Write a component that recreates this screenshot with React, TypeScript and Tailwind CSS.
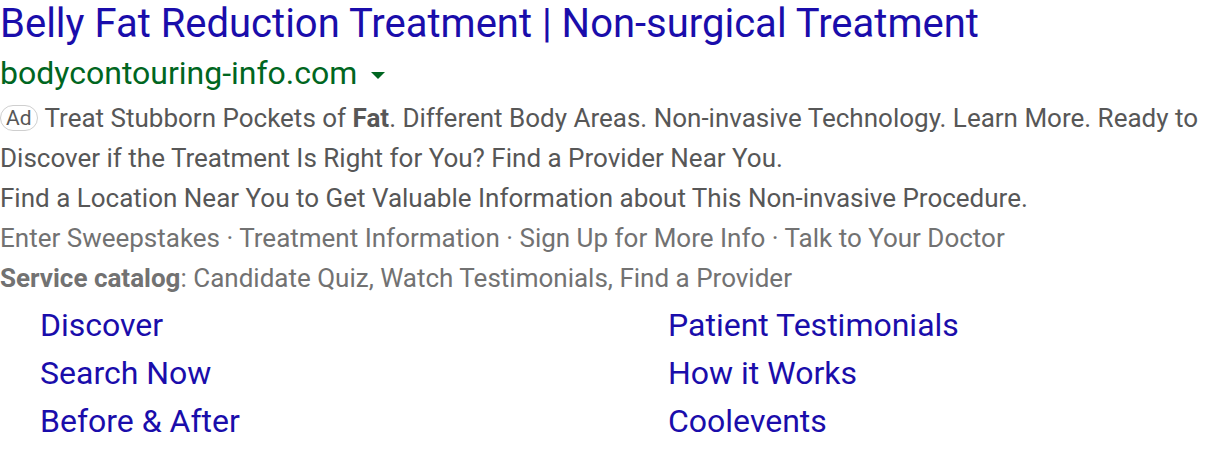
import { ReactNode } from 'react';

const sitelinks: [string, string][] = [
  ['Discover', 'Patient Testimonials'],
  ['Search Now', 'How it Works'],
  ['Before & After', 'Coolevents'],
];

function Line({ children, className = '' }: { children: ReactNode; className?: string }) {
  return <div className={`h-[40px] leading-[40px] whitespace-nowrap ${className}`}>{children}</div>;
}

export default function App() {
  return (
    <div className="bg-white w-[1216px] h-[450px] overflow-hidden font-['Roboto',sans-serif]">
      <h1 className="text-[40px] leading-[48px] text-[#1a0dab] whitespace-nowrap">
        Belly Fat Reduction Treatment | Non-surgical Treatment
      </h1>
      <div className="flex items-center h-[50px] text-[32px] text-[#006621]">
        <span>bodycontouring-info.com</span>
        <span className="ml-[14px] mt-[4px] w-0 h-0 border-l-[7px] border-r-[7px] border-t-[7px] border-l-transparent border-r-transparent border-t-[#006621]" />
      </div>
      <div className="text-[26px] text-[#575757]">
        <Line className="flex items-center">
          <span className="inline-flex items-center justify-center h-[26px] px-[5px] mr-[7px] rounded-full border border-[#cfcfcf] text-[21px] leading-none">
            Ad
          </span>
          <span>
            Treat Stubborn Pockets of <b className="font-bold">Fat</b>. Different Body Areas. Non-invasive Technology. Learn More. Ready to
          </span>
        </Line>
        <Line>Discover if the Treatment Is Right for You? Find a Provider Near You.</Line>
        <Line>Find a Location Near You to Get Valuable Information about This Non-invasive Procedure.</Line>
        <Line className="text-[#727272]">
          Enter Sweepstakes · Treatment Information · Sign Up for More Info · Talk to Your Doctor
        </Line>
        <Line className="text-[#727272]">
          <b className="font-bold">Service catalog</b>: Candidate Quiz, Watch Testimonials, Find a Provider
        </Line>
      </div>
      <div className="pl-[40px] mt-[3px] text-[32px] leading-[48px] text-[#1a0dab]">
        {sitelinks.map(([a, b]) => (
          <div key={a} className="grid grid-cols-[628px_1fr]">
            <span>{a}</span>
            <span>{b}</span>
          </div>
        ))}
      </div>
    </div>
  );
}
